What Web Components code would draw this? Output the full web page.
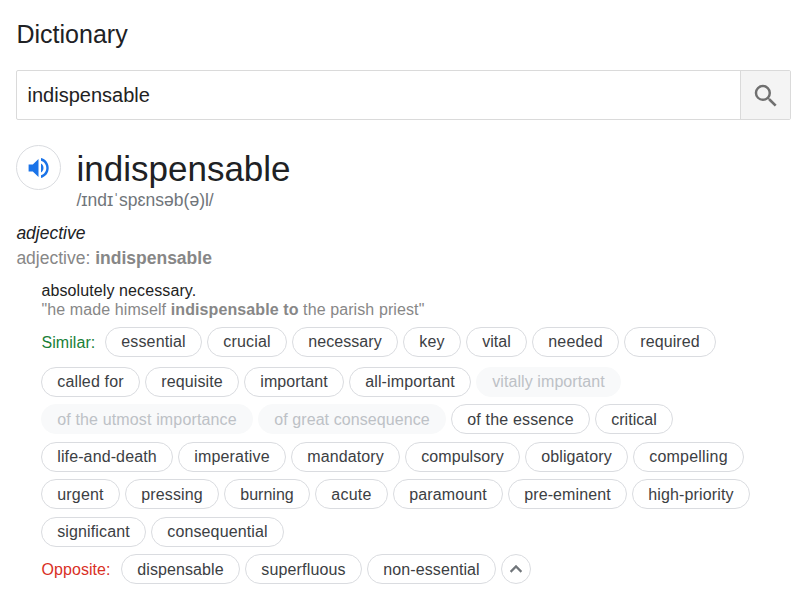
<!DOCTYPE html>
<html lang="en"><head><meta charset="utf-8"><title>Dictionary</title>
<style>
body{margin:0;background:#fff;font-family:"Liberation Sans",Arial,sans-serif;color:#202124}
</style></head><body>
<dictionary-page></dictionary-page>
<script>
function define(name, html, setup) {
  const t = document.createElement('template');
  t.innerHTML = html;
  customElements.define(name, class extends HTMLElement {
    connectedCallback() {
      if (this.shadowRoot) return;
      this.attachShadow({mode: 'open'}).append(t.content.cloneNode(true));
      if (setup) setup(this, this.shadowRoot);
    }
  });
}

define('search-field', `<style>
:host{display:flex;box-sizing:border-box;width:775px;height:50px;border:1px solid #dadada;border-radius:2px;overflow:hidden}
.q{flex:1;padding-left:10.5px;font-size:20px;line-height:48px;color:#222}
.b{box-sizing:border-box;width:50px;padding-top:2px;border-left:1px solid #dadada;background:#f4f4f4;display:flex;align-items:center;justify-content:center}
svg{display:block}
</style><div class="q"><slot></slot></div><div class="b"><svg width="30" height="30" viewBox="0 0 24 24" fill="#707070"><path d="M15.500 14h-.79l-.28-.27A6.471 6.471 0 0 0 16 9.500 6.500 6.500 0 1 0 9.500 16c1.610 0 3.090-.59 4.230-1.570l.27.28v.79l5 4.990L20.490 19l-4.990-5zm-6 0C7.010 14 5 11.990 5 9.500S7.010 5 9.500 5 14 7.010 14 9.500 11.990 14 9.500 14z"/></svg></div>`);

define('speaker-button', `<style>
:host{display:flex;box-sizing:border-box;width:45px;height:45px;border:1px solid #dadce0;border-radius:50%;align-items:center;justify-content:center;flex:none}
svg{display:block}
</style><svg width="24" height="24" viewBox="0 0 24 24" fill="#1a73e8"><path d="M1.600 8.500v7h4.200L11.500 21V3L5.800 8.500zM14 7.600v8.800c1.500-.8 2.500-2.500 2.500-4.400S15.500 8.400 14 7.600zM14 2.100v2.600c3.200.9 5.300 3.800 5.300 7.300s-2.100 6.400-5.300 7.300v2.600c4.600-1 7.700-5 7.700-9.900s-3.100-8.900-7.700-9.900z"/></svg>`);

define('word-chip', `<style>
:host{display:flex;box-sizing:border-box;height:30px;padding-top:var(--drop,0px);border:1px solid #dadce0;border-radius:15px;align-items:center;justify-content:center;font-size:16px;line-height:26px;color:#3c4043;white-space:nowrap;flex:none}
:host([faded]){background:#f8f9fa;border-color:#f8f9fa;color:#bdc1c6}
</style><span><slot></slot></span>`, (host, root) => {
  const w = +host.getAttribute('w'), span = root.querySelector('span');
  host.style.width = w + 'px';
  const n = host.textContent.length;
  const gap = (w - 32.5 - span.getBoundingClientRect().width) / n;
  span.style.letterSpacing = gap.toFixed(3) + 'px';
});

define('collapse-button', `<style>
:host{display:flex;box-sizing:border-box;width:30px;height:30px;border:1px solid #dadce0;border-radius:50%;align-items:center;justify-content:center}
</style><svg width="24" height="24" viewBox="0 0 24 24" fill="#70757a"><path d="M12 8l-6 6 1.410 1.410L12 10.830l4.590 4.580L18 14z" stroke="#70757a" stroke-width=".4"/></svg>`);

define('chip-row', `<style>
:host{display:flex;gap:5px;height:30px;align-items:center}
::slotted(b){box-sizing:border-box;font-weight:400;font-size:16px;line-height:28px;padding-top:2px;padding-left:.5px;letter-spacing:.06px}
</style><slot></slot>`);

define('dictionary-page', `<style>
:host{display:block;box-sizing:border-box;width:808px;height:596px;padding:19px 16px 0}
h1{margin:0 0 21px;padding-left:.5px;font-size:25px;line-height:30px;font-weight:400;color:#202124}
.head{display:flex;gap:15.500px;margin-top:25px;height:70px}
.word{font-size:35px;line-height:44px;height:43px;margin-top:2px;color:#202124}
.ipa{font-size:17.500px;line-height:20px;color:#70757a}
.pos,.form{padding-left:.4px}
.pos{font-size:17.500px;line-height:24px;font-style:italic;margin-top:6px;color:#202124}
.form{font-size:17.500px;line-height:24px;color:#878787;margin-top:1px}
.sense{padding-left:25px;margin-top:11px;font-size:16px;line-height:19px}
.def,.ex{padding-left:.5px;letter-spacing:.1px}
.def{color:#222}.ex{color:#878787}
.rows{display:grid;gap:7.500px;padding-top:7.800px}
.first{margin-bottom:2.500px}
.low{--drop:2px}
</style>
<h1>Dictionary</h1>
<search-field>indispensable</search-field>
<div class="head"><speaker-button></speaker-button><div><div class="word">indispensable</div><div class="ipa">/ɪndɪˈspɛnsəb(ə)l/</div></div></div>
<div class="pos">adjective</div>
<div class="form">adjective: <b>indispensable</b></div>
<div class="sense"><div class="def">absolutely necessary.</div><div class="ex">"he made himself <b>indispensable to</b> the parish priest"</div>
<div class="rows">
<chip-row class="first"><b style="color:#188038;width:59px">Similar:</b><word-chip w="97">essential</word-chip><word-chip w="80">crucial</word-chip><word-chip w="106">necessary</word-chip><word-chip w="58">key</word-chip><word-chip w="61">vital</word-chip><word-chip w="87">needed</word-chip><word-chip w="92">required</word-chip></chip-row>
<chip-row><word-chip w="99">called for</word-chip><word-chip w="94">requisite</word-chip><word-chip w="100">important</word-chip><word-chip w="122">all-important</word-chip><word-chip faded w="145">vitally important</word-chip></chip-row>
<chip-row class="low"><word-chip faded w="212">of the utmost importance</word-chip><word-chip faded w="188">of great consequence</word-chip><word-chip w="139">of the essence</word-chip><word-chip w="78">critical</word-chip></chip-row>
<chip-row><word-chip w="132">life-and-death</word-chip><word-chip w="108">imperative</word-chip><word-chip w="109">mandatory</word-chip><word-chip w="115">compulsory</word-chip><word-chip w="103">obligatory</word-chip><word-chip w="111">compelling</word-chip></chip-row>
<chip-row class="low"><word-chip w="79">urgent</word-chip><word-chip w="94">pressing</word-chip><word-chip w="86">burning</word-chip><word-chip w="73">acute</word-chip><word-chip w="110">paramount</word-chip><word-chip w="119">pre-eminent</word-chip><word-chip w="118">high-priority</word-chip></chip-row>
<chip-row><word-chip w="105">significant</word-chip><word-chip w="133">consequential</word-chip></chip-row>
<chip-row class="low"><b style="color:#d93025;width:75px">Opposite:</b><word-chip w="119">dispensable</word-chip><word-chip w="117">superfluous</word-chip><word-chip w="129">non-essential</word-chip><collapse-button></collapse-button></chip-row>
</div></div>`);
</script></body></html>
